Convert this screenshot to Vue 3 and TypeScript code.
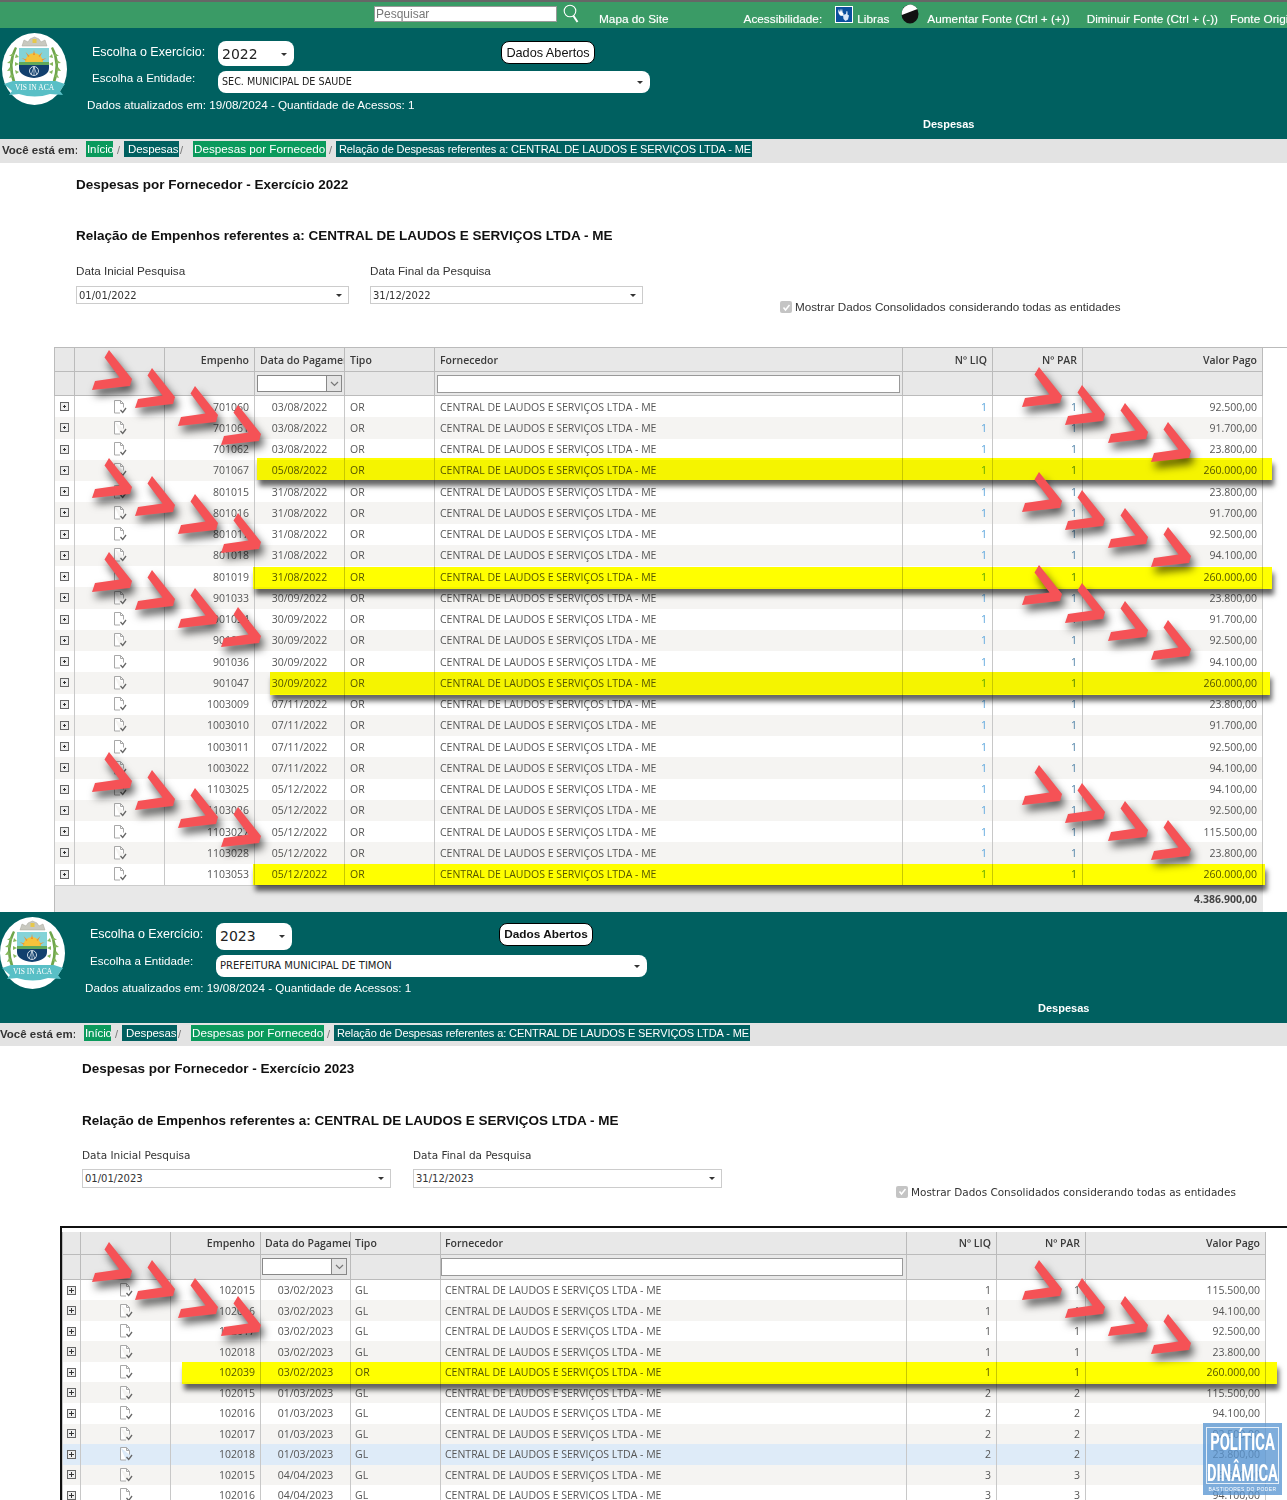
<script setup lang="ts">
interface Row {
  emp: string
  date: string
  tipo: string
  liq: number
  par: number
  valor: string
  blue?: boolean
}
interface Mark {
  top: number
  height: number
  left: number
  width: number
}
interface Section {
  id: string
  year: string
  entity: string
  initial: string
  final: string
  plus: string
  rows: Row[]
  marks: Mark[]
  arrows: [number, number][]
  total?: string
}

const supplier = 'CENTRAL DE LAUDOS E SERVIÇOS LTDA - ME'

function r(emp: string, date: string, valor: string, tipo = 'OR', n = 1, blue = false): Row {
  return { emp, date, tipo, liq: n, par: n, valor, blue }
}

const sections: Section[] = [
  {
    id: 'sec-a',
    year: '2022',
    entity: 'SEC. MUNICIPAL DE SAUDE',
    initial: '01/01/2022',
    final: '31/12/2022',
    plus: 'M3 4.500h3M4.500 3v3',
    total: '4.386.900,00',
    rows: [
      r('701060', '03/08/2022', '92.500,00'),
      r('701061', '03/08/2022', '91.700,00'),
      r('701062', '03/08/2022', '23.800,00'),
      r('701067', '05/08/2022', '260.000,00'),
      r('801015', '31/08/2022', '23.800,00'),
      r('801016', '31/08/2022', '91.700,00'),
      r('801017', '31/08/2022', '92.500,00'),
      r('801018', '31/08/2022', '94.100,00'),
      r('801019', '31/08/2022', '260.000,00'),
      r('901033', '30/09/2022', '23.800,00'),
      r('901034', '30/09/2022', '91.700,00'),
      r('901035', '30/09/2022', '92.500,00'),
      r('901036', '30/09/2022', '94.100,00'),
      r('901047', '30/09/2022', '260.000,00'),
      r('1003009', '07/11/2022', '23.800,00'),
      r('1003010', '07/11/2022', '91.700,00'),
      r('1003011', '07/11/2022', '92.500,00'),
      r('1003022', '07/11/2022', '94.100,00'),
      r('1103025', '05/12/2022', '94.100,00'),
      r('1103026', '05/12/2022', '92.500,00'),
      r('1103027', '05/12/2022', '115.500,00'),
      r('1103028', '05/12/2022', '23.800,00'),
      r('1103053', '05/12/2022', '260.000,00'),
    ],
    // posicoes relativas ao topo da grade
    marks: [
      { top: 110, height: 22, left: 203, width: 1015 },
      { top: 219, height: 22, left: 199, width: 1019 },
      { top: 324, height: 23, left: 216, width: 1000 },
      { top: 516, height: 21, left: 199, width: 1012 },
    ],
    arrows: [[38, 2], [38, 110], [38, 204], [38, 404], [968, 19], [968, 124], [968, 217], [968, 417]],
  },
  {
    id: 'sec-b',
    year: '2023',
    entity: 'PREFEITURA MUNICIPAL DE TIMON',
    initial: '01/01/2023',
    final: '31/12/2023',
    plus: 'M2 4.500h5M4.500 2v5',
    rows: [
      r('102015', '03/02/2023', '115.500,00', 'GL'),
      r('102016', '03/02/2023', '94.100,00', 'GL'),
      r('102017', '03/02/2023', '92.500,00', 'GL'),
      r('102018', '03/02/2023', '23.800,00', 'GL'),
      r('102039', '03/02/2023', '260.000,00'),
      r('102015', '01/03/2023', '115.500,00', 'GL', 2),
      r('102016', '01/03/2023', '94.100,00', 'GL', 2),
      r('102017', '01/03/2023', '92.500,00', 'GL', 2),
      r('102018', '01/03/2023', '23.800,00', 'GL', 2, true),
      r('102015', '04/04/2023', '115.500,00', 'GL', 3),
      r('102016', '04/04/2023', '94.100,00', 'GL', 3),
    ],
    marks: [{ top: 134, height: 22, left: 120, width: 1095 }],
    arrows: [[30, 14], [960, 32]],
  },
]

const steps = [0, 1, 2, 3]

function arrowStyle(pos: [number, number], step: number) {
  return { left: `${pos[0] + step * 43}px`, top: `${pos[1] + step * 18.2}px` }
}

function markStyle(m: Mark) {
  return { left: `${m.left}px`, width: `${m.width}px`, top: `${m.top}px`, height: `${m.height}px` }
}
</script>

<template>
  <div class="page">
    <!-- Barra de acessibilidade -->
    <div class="topbar">
      <input class="search" placeholder="Pesquisar" />
      <svg class="search-ico" width="17" height="19" viewBox="0 0 17 19">
        <circle cx="7" cy="7" r="5.800" fill="#3a9b66" stroke="#fff" stroke-width="1.100" />
        <path d="M10.500 12l4 6" stroke="#fff" stroke-width="2" fill="none" />
      </svg>
      <span class="t-mapa">Mapa do Site</span>
      <span class="t-acess">Acessibilidade:</span>
      <svg class="libras" width="18" height="17" viewBox="0 0 18 17">
        <rect x=".5" y=".5" width="17" height="16" fill="#0b4f9e" stroke="#fff" />
        <path d="M3 3l1.500 3L5 2.500l1 3.500 1-3.500.6 4 1.200 1.500L7.500 10 5 9.500 3.500 7z" fill="#fff" />
        <path d="M8 9l3-1 .5-3 1 .5v3l1.500 1-1 4-2.500 1.500-2-2z" fill="#d9e6f7" />
      </svg>
      <span class="t-libras">Libras</span>
      <svg class="contrast" width="18" height="20" viewBox="0 0 18 20">
        <ellipse cx="9" cy="10" rx="8.500" ry="9.500" fill="#111" />
        <path d="M.8 11A8.500 9 0 0 1 16.500 5z" fill="#fff" />
      </svg>
      <span class="t-mais">Aumentar Fonte (Ctrl + (+))</span>
      <span class="t-menos">Diminuir Fonte (Ctrl + (-))</span>
      <span class="t-orig">Fonte Original</span>
    </div>

    <section v-for="s in sections" :key="s.id" :class="['sec', s.id]">
      <!-- Cabecalho -->
      <header class="head">
        <svg class="logo" viewBox="0 0 65 72">
          <ellipse cx="32.500" cy="36" rx="32.500" ry="36" fill="#fff" />
          <path d="M20 13l2-6 4 2 2-3 4.500-2 4.500 2 2 3 4-2 2 6z" fill="#c9c9c0" stroke="#a5a598" stroke-width=".5" />
          <rect x="30.500" y="6" width="4" height="4" fill="#e6c84a" />
          <path d="M17 15h30v20q0 8-15 10-15-2-15-10z" fill="#12406e" />
          <path d="M17 15h30v14H17z" fill="#84d3d8" />
          <path d="M17 29h30v3H17z" fill="#62a95a" />
          <path d="M23 29a9 9 0 0 1 18 0z" fill="#f5c33c" />
          <path d="M32 17l1 5h-2zM23.500 19l4 4-1.200 1zM40.500 19l-4 4 1.200 1zM19.500 25l5 1.500-.5 1.200zM44.500 25l-5 1.500.5 1.200z" fill="#f0902c" />
          <circle cx="32" cy="38" r="4.500" fill="none" stroke="#e3ebf2" stroke-width=".9" />
          <path d="M29 42l3-8 3 8M32 34v8" fill="none" stroke="#e3ebf2" stroke-width=".7" />
          <path d="M13 14Q4 30 11 50l2.500-1Q7 31 15 15z" fill="#6fa64c" />
          <path d="M51 14q9 16 2 36l-2.500-1Q57 31 49 15z" fill="#6fa64c" />
          <path d="M11 20l-4 3 5 0zM9 27l-4 3 5 .5zM8 34l-3 4 5-.5zM9 41l-2 4 5-1.500zM14 21l3 3-4 1zM13 29l4 2-4 2zM13 37l4 2-3 2zM53 20l4 3-5 0zM55 27l4 3-5 .5zM56 34l3 4-5-.5zM55 41l2 4-5-1.500zM50 21l-3 3 4 1zM51 29l-4 2 4 2zM51 37l-4 2 3 2z" fill="#86b85d" />
          <path d="M2 51l9-3h43l9 3-5 7 3 4-13-1q-15 5-31 0L7 62l3-4z" fill="#59bfc6" />
          <text x="32.500" y="56.500" text-anchor="middle" class="logo-txt">VIS IN ACA</text>
        </svg>
        <div class="form">
          <div class="form-row one">
            <span class="lbl">Escolha o Exercício:</span>
            <div class="pick year">{{ s.year }}<i class="caret" /></div>
            <button class="open">Dados Abertos</button>
          </div>
          <div class="form-row two">
            <span class="lbl">Escolha a Entidade:</span>
            <div class="pick entity">{{ s.entity }}<i class="caret" /></div>
          </div>
          <div class="updated">Dados atualizados em: 19/08/2024 - Quantidade de Acessos: 1</div>
        </div>
        <div class="menu">Despesas</div>
      </header>

      <!-- Trilha -->
      <nav class="crumbs">
        <b>Você está em:</b>
        <a class="c1 green">Início</a><span class="sl s1">/</span>
        <a class="c2 dark">Despesas</a><span class="sl s2">/</span>
        <a class="c3 green">Despesas por Fornecedor</a><span class="sl s3">/</span>
        <a class="c4 dark">Relação de Despesas referentes a: {{ supplier }}</a>
      </nav>

      <!-- Titulos e filtros -->
      <div class="content">
        <h2 class="title-a">Despesas por Fornecedor - Exercício {{ s.year }}</h2>
        <h2 class="title-b">Relação de Empenhos referentes a: {{ supplier }}</h2>
        <div class="filters">
          <div class="field">
            <label>Data Inicial Pesquisa</label>
            <div class="date">{{ s.initial }}<i class="caret" /></div>
          </div>
          <div class="field">
            <label>Data Final da Pesquisa</label>
            <div class="date">{{ s.final }}<i class="caret" /></div>
          </div>
          <div class="consol">
            <span class="check"><svg width="9" height="9" viewBox="0 0 9 9"><path d="M1.500 4.500l2 2.500 4-5" stroke="#fff" stroke-width="1.500" fill="none" /></svg></span>
            Mostrar Dados Consolidados considerando todas as entidades
          </div>
        </div>
      </div>

      <!-- Grade -->
      <div class="grid">
        <div class="row hdr">
          <div class="cell" /><div class="cell" />
          <div class="cell right">Empenho</div>
          <div class="cell clip">Data do Pagamento</div>
          <div class="cell">Tipo</div>
          <div class="cell">Fornecedor</div>
          <div class="cell right">Nº LIQ</div>
          <div class="cell right">Nº PAR</div>
          <div class="cell right">Valor Pago</div>
        </div>
        <div class="row flt">
          <div class="cell" /><div class="cell" /><div class="cell" />
          <div class="cell"><div class="combo"><span class="combo-btn"><svg width="9" height="6" viewBox="0 0 9 6"><path d="M1 1l3.500 3.500L8 1" stroke="#777" stroke-width="1.200" fill="none" /></svg></span></div></div>
          <div class="cell" />
          <div class="cell"><div class="txt" /></div>
          <div class="cell" /><div class="cell" /><div class="cell" />
        </div>
        <div
          v-for="(row, i) in s.rows"
          :key="i"
          :class="['row', 'line', { alt: i % 2 === 1, blue: row.blue }]"
        >
          <div class="cell mid">
            <svg width="9" height="9" viewBox="0 0 9 9">
              <rect x=".5" y=".5" width="8" height="8" fill="#eee" stroke="#666" />
              <path :d="s.plus" stroke="#333" />
            </svg>
          </div>
          <div class="cell mid">
            <svg width="16" height="16" viewBox="0 0 16 16">
              <path d="M2.500 1.500h6l3 3v4M2.500 1.500v12.500h5.500M8.500 1.500v3h3" fill="#fff" stroke="#a8a8a8" />
              <path d="M8.500 11l2.200 2.500 3.300-4.500" fill="none" stroke="#666" stroke-width="1.300" />
            </svg>
          </div>
          <div class="cell right">{{ row.emp }}</div>
          <div class="cell mid">{{ row.date }}</div>
          <div class="cell">{{ row.tipo }}</div>
          <div class="cell">{{ supplier }}</div>
          <div class="cell right liq">{{ row.liq }}</div>
          <div class="cell right par">{{ row.par }}</div>
          <div class="cell right">{{ row.valor }}</div>
        </div>
        <div v-if="s.total" class="foot">{{ s.total }}</div>

        <!-- Marcacoes sobre a imagem -->
        <div v-for="(m, i) in s.marks" :key="'m' + i" class="mark" :style="markStyle(m)" />
        <template v-for="(pos, i) in s.arrows" :key="'a' + i">
          <svg
            v-for="n in steps"
            :key="n"
            class="arrow"
            :style="arrowStyle(pos, n)"
            width="41"
            height="41"
            viewBox="0 0 41 41"
          >
            <path d="M12.500 7.500l4.500-7.500 23 29-2 7L0 40l3-9 24.500-3.500z" fill="#f55256" />
          </svg>
        </template>
      </div>
    </section>

    <!-- Selo -->
    <div class="stamp">
      <div class="stamp-in">
        <span>POLÍTICA</span>
        <span>DINÂMICA</span>
      </div>
      <small>BASTIDORES DO PODER</small>
    </div>
  </div>
</template>

<style>
html, body { margin: 0; background: #fff; }
</style>

<style scoped>
.page {
  position: relative;
  width: 1287px;
  height: 1500px;
  overflow: hidden;
  background: #fff;
  font-family: "Liberation Sans", Arial, sans-serif;
}

/* Barra de acessibilidade */
.topbar {
  display: flex;
  align-items: flex-start;
  height: 26px;
  border-top: 2px solid #666;
  background: #3a9b66;
  color: #fff;
  font-size: 11.800px;
  white-space: nowrap;
  line-height: 14px;
  text-shadow: 0 0 1px rgba(255, 255, 255, .5);
}
.search {
  flex: none;
  box-sizing: border-box;
  width: 183px;
  height: 16px;
  margin: 4px 0 0 374px;
  padding: 0 1px;
  border: 1px solid #999;
  background: #fff;
  font: 12px "Liberation Sans", sans-serif;
}
.search::placeholder { color: #777; opacity: 1; }
.search-ico { flex: none; margin: 2px 0 0 6px; }
.t-mapa { margin: 10px 0 0 19px; }
.t-acess { margin: 10px 0 0 75px; }
.libras { flex: none; margin: 4px 0 0 13px; }
.t-libras { margin: 10px 0 0 4px; }
.contrast { flex: none; margin: 2px 0 0 12px; }
.t-mais { margin: 10px 0 0 8px; }
.t-menos { margin: 10px 0 0 17px; }
.t-orig { margin: 10px 0 0 12px; }

/* Cabecalho */
.head {
  display: flex;
  height: 111px;
  background: #006060;
  color: #fff;
  font-size: 12px;
}
.logo { flex: none; width: 65px; height: 72px; }
.logo-txt { font: 7.500px "Liberation Serif", serif; fill: #fff; }
.sec-a .logo { margin: 5px 0 0 2px; }
.sec-b .logo { margin: 5px 0 0 0; }
.form { flex: none; width: 585px; margin-left: 25px; }
.form-row { display: flex; align-items: flex-start; }
.lbl { width: 126px; flex: none; line-height: 16px; }
.form-row.one { margin-top: 13px; height: 30px; }
.form-row.one .lbl { margin-top: 3px; font-size: 12.500px; }
.form-row.two { height: 28px; }
.form-row.two .lbl { margin-top: -1px; font-size: 11.600px; }
.sec-b .form-row.one { margin-top: 11px; height: 32px; }
.sec-b .form-row.two { height: 26px; }
.sec-b .form-row.two .lbl { margin-top: -2px; }
.pick {
  position: relative;
  box-sizing: border-box;
  background: #fff;
  color: #222;
  border-radius: 8px;
  font-family: "DejaVu Sans", sans-serif;
}
.year { width: 76px; height: 25px; line-height: 27px; padding-left: 4px; font-size: 14px; }
.sec-b .year { height: 27px; }
.entity { width: 432px; height: 22px; line-height: 22px; padding-left: 4px; font-size: 9.600px; }
.sec-b .entity { width: 431px; font-size: 10px; }
.caret {
  position: absolute;
  right: 7px;
  top: 50%;
  margin-top: -1px;
  border-left: 3px solid transparent;
  border-right: 3px solid transparent;
  border-top: 3px solid #333;
}
.open {
  flex: none;
  box-sizing: border-box;
  width: 94px;
  height: 23px;
  margin-left: 207px;
  padding: 0;
  background: #fff;
  border: 1px solid #000;
  border-radius: 8px;
  color: #111;
  font: 12.700px "Liberation Sans", sans-serif;
}
.sec-b .open { font-weight: 700; font-size: 11.800px; }
.updated { margin-left: -5px; line-height: 14px; font-size: 11.700px; }
.sec-a .updated { margin-top: -1px; }
.sec-b .updated { font-size: 11.650px; }
.menu { font-size: 11px; font-weight: 700; line-height: 13px; align-self: flex-end; margin-bottom: 8px; }
.sec-a .menu { margin-left: 246px; }
.sec-b .menu { margin-left: 363px; }

/* Trilha */
.crumbs {
  display: flex;
  align-items: flex-start;
  height: 24px;
  background: #e3e3e3;
  color: #444;
  font-size: 11px;
  letter-spacing: -.1px;
  white-space: nowrap;
  line-height: 16px;
}
.crumbs b { width: 75px; margin: 3px 0 0 2px; color: #333; font-size: 11.500px; letter-spacing: 0; overflow: hidden; }
.sec-b .crumbs { height: 23px; }
.sec-b .crumbs b { margin-left: 0; }
.crumbs a { flex: none; box-sizing: border-box; margin-top: 2px; color: #fff; overflow: hidden; }
.crumbs .green { background: #0a9a5c; }
.crumbs .dark { background: #006060; }
.sl { flex: none; margin-top: 3px; color: #777; padding-left: 4px; box-sizing: border-box; }
.s1 { width: 11px; }
.s2 { width: 14px; padding-left: 1px; }
.s3 { width: 10px; padding-left: 3px; }
.c1 { margin-left: 9px; width: 27px; padding-left: 1px; font-size: 11.500px; }
.c2 { width: 55px; padding: 0 0 0 4px; font-size: 11.500px; }
.c3 { width: 133px; padding-left: 1px; font-size: 11.700px; letter-spacing: 0; }
.c4 { width: 416px; padding: 0 3px; }

/* Titulos e filtros */
.content { color: #111; box-sizing: border-box; }
.sec-a .content { padding: 14px 0 0 76px; height: 184px; }
.sec-b .content { padding: 15px 0 0 82px; height: 180px; }
h2 { margin: 0; font-size: 13.500px; line-height: 16px; }
.title-b { margin-top: 35px; }
.sec-b .title-b { margin-top: 36px; }
.filters { display: flex; margin-top: 20px; align-items: flex-start; }
.sec-b .filters { margin-top: 19px; }
.field { width: 273px; margin-right: 21px; display: flex; flex-direction: column; gap: 8px; }
.sec-b .field { width: 309px; margin-right: 22px; gap: 7px; }
.field label { font-size: 11.700px; line-height: 14px; color: #333; }
.sec-b .field label { font-family: "DejaVu Sans", sans-serif; font-size: 10.500px; }
.date {
  position: relative;
  box-sizing: border-box;
  height: 18px;
  padding-left: 2px;
  border: 1px solid #ccc;
  background: #fff;
  font: 10px/17px "DejaVu Sans", sans-serif;
  color: #333;
}
.sec-b .date { height: 19px; line-height: 18px; }
.date .caret { right: 6px; }
.consol {
  display: flex;
  align-items: center;
  gap: 3px;
  margin: 36px 0 0 116px;
  font-size: 11.700px;
  color: #333;
  line-height: 14px;
  white-space: nowrap;
}
.sec-b .consol { margin: 37px 0 0 152px; font-family: "DejaVu Sans", sans-serif; font-size: 10.450px; }
.check {
  display: flex;
  align-items: center;
  justify-content: center;
  width: 12px;
  height: 12px;
  background: #c4c4c4;
  border-radius: 2px;
}

/* Grade */
.grid {
  position: relative;
  font-family: "Open Sans", sans-serif;
  font-size: 10.500px;
  color: #555;
  --cols: 20px 90px 90px 90px 90px 468px 90px 90px 180px;
}
.sec-a .grid { margin-left: 54px; border-top: 1px solid #bbb; }
.sec-b .grid {
  margin-left: 60px;
  padding-top: 4px;
  border-top: 2px solid #111;
  border-left: 2px solid #111;
  --cols: 18px 90px 90px 90px 90px 466px 90px 89px 180px;
}
.row { box-sizing: border-box; display: grid; grid-template-columns: var(--cols); width: max-content; }
.cell {
  box-sizing: border-box;
  display: flex;
  align-items: center;
  min-width: 0;
  padding: 0 5px;
  border-right: 1px solid #c8c8c8;
  white-space: nowrap;
  overflow: hidden;
}
.sec-b .cell { padding: 0 5px 0 4px; }
.right { justify-content: flex-end; }
.cell.mid { justify-content: center; padding: 0; }
.liq { color: #5aa5dc; }
.par { color: #4a7fa5; }
.sec-b .liq, .sec-b .par { color: #555; }
.hdr, .flt { background: #e8e8e8; border-bottom: 1px solid #bbb; border-left: 1px solid #bbb; }
.hdr { height: 24px; font-weight: 600; color: #3a3a3a; }
.sec-b .hdr { height: 23px; }
.flt { height: 24px; }
.sec-b .flt { height: 25px; }
.hdr .cell, .flt .cell { border-right-color: #bbb; }
.cell.clip { padding-right: 0; }
.combo {
  position: relative;
  box-sizing: border-box;
  flex: none;
  width: 85px;
  height: 17px;
  margin-left: -3px;
  background: #fff;
  border: 1px solid #888;
}
.combo-btn {
  position: absolute;
  right: 0;
  top: 0;
  bottom: 0;
  width: 14px;
  display: flex;
  align-items: center;
  justify-content: center;
  background: #e4e4e4;
  border-left: 1px solid #888;
}
.txt {
  box-sizing: border-box;
  flex: none;
  width: 463px;
  height: 18px;
  margin-left: -3px;
  background: #fff;
  border: 1px solid #999;
}
.sec-b .txt { width: 462px; margin-left: -4px; }
.line { border-left: 1px solid #c8c8c8; }
.sec-a .line { height: 21.260px; }
.sec-b .line { height: 20.550px; }
.alt { background: #f5f4f2; }
.blue { background: #deebf8; }
.foot {
  box-sizing: border-box;
  width: 1209px;
  height: 27px;
  padding: 6px 6px 0 0;
  background: #e8e8e8;
  border-left: 1px solid #bbb;
  border-top: 1px solid #ccc;
  text-align: right;
  font-weight: 700;
  color: #444;
}
.mark {
  position: absolute;
  background: #ff0;
  mix-blend-mode: multiply;
  box-shadow: 2px 6px 5px rgba(0, 0, 0, .6);
}
.arrow {
  position: absolute;
  filter: drop-shadow(3px 6px 4px rgba(0, 0, 0, .65));
}

/* Selo */
.stamp {
  position: absolute;
  left: 1203px;
  top: 1423px;
  box-sizing: border-box;
  width: 79px;
  height: 72px;
  padding: 4px 3px 0;
  background: rgba(90, 150, 210, .78);
  color: #fff;
  text-align: center;
}
.stamp-in {
  box-sizing: border-box;
  display: flex;
  flex-direction: column;
  gap: 6px;
  align-items: center;
  height: 57px;
  padding-top: 2px;
  border: 1px solid rgba(255, 255, 255, .8);
  font: 700 23px/25px Roboto, sans-serif;
}
.stamp-in span { display: block; transform: scaleX(.64); white-space: nowrap; }
.stamp small { display: block; margin-top: 2px; font-size: 5px; letter-spacing: .4px; white-space: nowrap; }
</style>
